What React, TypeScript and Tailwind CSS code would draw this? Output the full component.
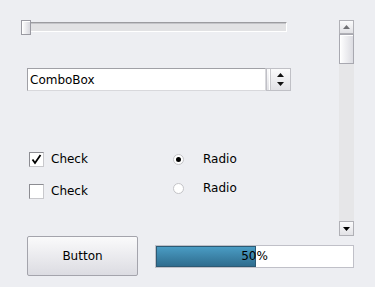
import React from "react";

const font = { fontFamily: '"DejaVu Sans", "Liberation Sans", sans-serif' };

function Slider() {
  return (
    <div className="relative h-[15px] w-[266px]">
      <div className="absolute left-0 right-0 top-[2px] h-[10px] border-t border-l border-t-[#9c9ca0] border-l-[#a8a8ac] border-b border-r border-b-white border-r-white bg-[#e2e2e4] shadow-[inset_0_1px_0_#c4c4c8]" />
      <div className="absolute left-0 top-0 h-[15px] w-[10px] border border-[#9a9aa2] bg-gradient-to-r from-white to-[#d8d8de] shadow-[inset_1px_1px_0_#ffffff]" />
    </div>
  );
}

function Combo() {
  return (
    <div className="flex h-[23px] ml-[6px]">
      <div className="w-[239px] h-[23px] bg-white border border-t-[#a0a0a6] border-l-[#a0a0a6] border-b-[#d8d8dc] border-r-[#d8d8dc] flex items-center pl-[2px] text-[12px] text-black">
        ComboBox
      </div>
      <div className="w-[25px] h-[23px] border border-[#c0c0c6] bg-gradient-to-b from-[#fbfbfc] to-[#e2e2e6] flex items-center">
        <div className="w-[2px] h-full ml-[2px] border-l border-[#ffffff] bg-[#c8c8cc]" />
        <div className="flex-1 flex flex-col items-center justify-center gap-[5px]">
          <svg width="7" height="4" viewBox="0 0 7 4"><path d="M3.5 0 L7 4 L0 4 Z" fill="#111" /></svg>
          <svg width="7" height="4" viewBox="0 0 7 4"><path d="M0 0 L7 0 L3.5 4 Z" fill="#111" /></svg>
        </div>
      </div>
    </div>
  );
}

function CheckBox({ checked }: { checked?: boolean }) {
  return (
    <div className="w-[15px] h-[15px] bg-white border border-t-[#8c8c92] border-l-[#8c8c92] border-b-[#c8c8cc] border-r-[#c8c8cc] flex items-center justify-center">
      {checked && (
        <svg width="11" height="11" viewBox="0 0 11 11">
          <path d="M1.5 5.5 L4 9 L9.5 1" stroke="#000" strokeWidth="1.8" fill="none" />
        </svg>
      )}
    </div>
  );
}

function Radio({ checked }: { checked?: boolean }) {
  return (
    <div className="w-[11px] h-[11px] rounded-full bg-white border border-[#c4c4c8] flex items-center justify-center">
      {checked && <div className="w-[5px] h-[5px] rounded-full bg-black" />}
    </div>
  );
}

function Scrollbar() {
  return (
    <div className="w-[15px] h-[216px] flex flex-col">
      <div className="h-[14px] border border-[#b0b0b6] bg-gradient-to-b from-[#fbfbfc] to-[#e2e2e6] flex items-center justify-center">
        <svg width="7" height="4" viewBox="0 0 7 4"><path d="M3.5 0 L7 4 L0 4 Z" fill="#707074" /></svg>
      </div>
      <div className="h-[30px] border border-[#a8a8b0] bg-gradient-to-r from-white to-[#dcdce2] shadow-[inset_1px_1px_0_#ffffff]" />
      <div className="flex-1 bg-[#e6e6e8]" />
      <div className="h-[15px] border border-[#b0b0b6] bg-gradient-to-b from-[#fbfbfc] to-[#e2e2e6] flex items-center justify-center">
        <svg width="7" height="4" viewBox="0 0 7 4"><path d="M0 0 L7 0 L3.5 4 Z" fill="#000" /></svg>
      </div>
    </div>
  );
}

export default function App() {
  return (
    <div className="w-[375px] h-[287px] bg-[#edeef2] text-[12px] text-black overflow-hidden" style={font}>
      <div className="flex pt-[20px] h-[236px]">
        <div className="w-[339px] pl-[21px] flex flex-col">
          <Slider />
          <div className="mt-[33px]"><Combo /></div>
          <div className="flex mt-[61px]">
            <div className="flex flex-col gap-[17px] ml-[8px] w-[144px]">
              <div className="flex items-center gap-[7px] h-[15px]"><CheckBox checked /><span className="leading-[15px]">Check</span></div>
              <div className="flex items-center gap-[7px] h-[15px]"><CheckBox /><span className="leading-[15px]">Check</span></div>
            </div>
            <div className="flex flex-col gap-[14px] mt-[-1px]">
              <div className="flex items-center h-[15px]"><div className="mt-[2px]"><Radio checked /></div><span className="ml-[19px]">Radio</span></div>
              <div className="flex items-center h-[15px]"><div className="mt-[2px]"><Radio /></div><span className="ml-[19px]">Radio</span></div>
            </div>
          </div>
        </div>
        <Scrollbar />
      </div>
      <div className="flex items-center h-[40px]">
        <button className="ml-[27px] w-[111px] h-[40px] rounded-[2px] border border-[#a4a4ac] bg-gradient-to-b from-[#fafafb] to-[#dcdce2] text-[12px] text-black flex items-center justify-center" style={font}>
          Button
        </button>
        <div className="ml-[17px] relative w-[199px] h-[23px] bg-white border border-[#c0c0c8]">
          <div className="absolute left-0 top-0 bottom-0 w-[100px] border border-[#2d5a74] bg-gradient-to-b from-[#4a9cc4] to-[#2f6d8f]" />
          <div className="absolute inset-0 flex items-center justify-center">50%</div>
        </div>
      </div>
    </div>
  );
}
